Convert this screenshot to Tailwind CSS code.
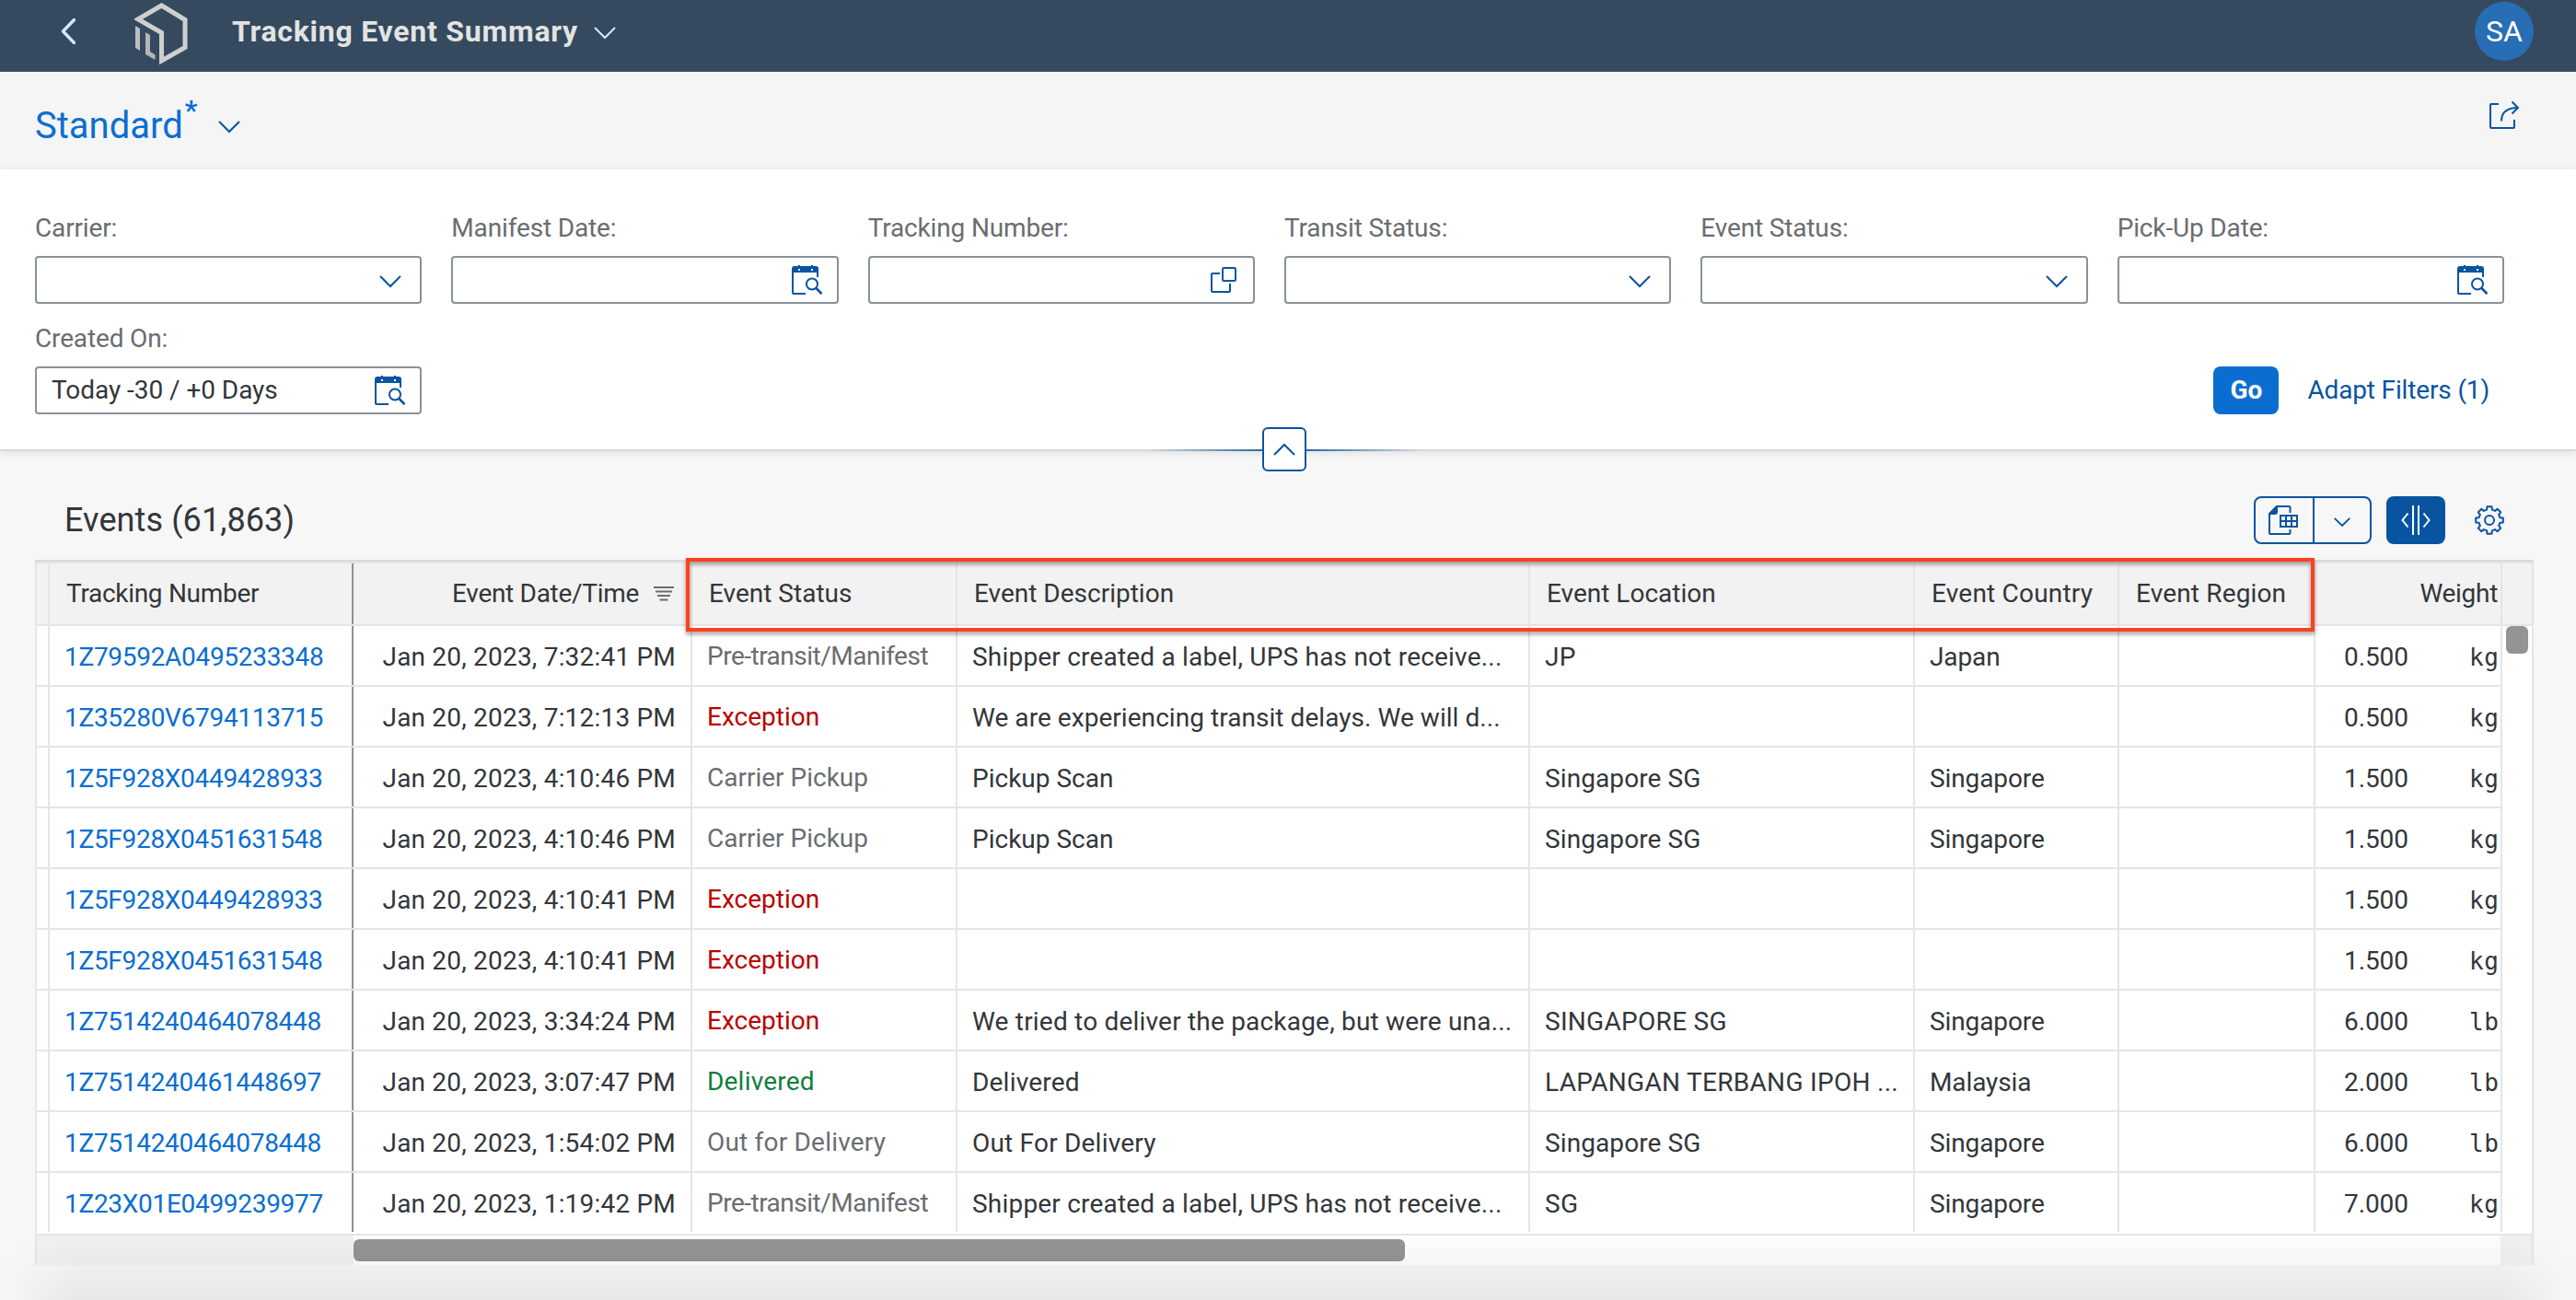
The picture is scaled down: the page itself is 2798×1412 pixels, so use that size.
<!DOCTYPE html>
<html lang="en">
<head>
  <meta charset="UTF-8">
  <meta name="viewport" content="width=device-width,initial-scale=1">
  <title>Tracking Event Summary</title>
  <script src="https://cdn.jsdelivr.net/npm/@tailwindcss/browser@4"></script>
</head>
<body class="relative h-[1412px] overflow-hidden bg-[#f7f7f7] font-['Roboto',sans-serif] text-[28px] leading-8 text-[#32363a]">

  <!-- Icons -->
  <svg class="hidden">
    <symbol id="chevron" viewBox="0 0 24 14"><path d="M1 1l11 11L23 1" fill="none" stroke="currentColor" stroke-width="2"/></symbol>
    <symbol id="calendar" viewBox="0 0 34 32">
      <path d="M28 13V4a2 2 0 0 0-2-2H3a2 2 0 0 0-2 2v26a1 1 0 0 0 1 1h13" fill="none" stroke="currentColor" stroke-width="2"/>
      <path d="M1 4q0-2 2-2h4V0h2v2h12V0h2v2h4q2 0 2 2v4H1z" fill="currentColor"/>
      <path d="M7 4h2v2H7zM21 4h2v2h-2z" fill="#fff"/>
      <circle cx="22" cy="20.500" r="6" fill="none" stroke="currentColor" stroke-width="2"/>
      <path d="M26.500 25l6 6.200" stroke="currentColor" stroke-width="2.600"/>
    </symbol>
    <symbol id="valuehelp" viewBox="0 0 28 28">
      <path d="M10 7H2a1 1 0 0 0-1 1v18a1 1 0 0 0 1 1h18a1 1 0 0 0 1-1v-8" fill="none" stroke="currentColor" stroke-width="2"/>
      <rect x="13" y="1" width="14" height="14" rx="1.500" fill="none" stroke="currentColor" stroke-width="2"/>
    </symbol>
  </svg>

  <!-- Shell bar -->
  <header class="flex h-[78px] items-center bg-[#354a5f] pr-[46px] pb-[10px] pl-[66px]">
    <svg class="h-7 w-4 text-[#d1e8ff]" viewBox="0 0 16 28"><path d="M14.500 1.500L2.500 14l12 12.500" fill="none" stroke="currentColor" stroke-width="3.400" stroke-linecap="round" stroke-linejoin="round"/></svg>
    <svg class="mt-1 ml-16 h-[68px] w-[60px]" viewBox="0 0 60 68">
      <path d="M29.500 4L55 19.500v30L29.500 64V33.500L4 18.800z" fill="none" stroke="#cfcfcf" stroke-width="5" stroke-linejoin="miter"/>
      <path d="M1 26l5 3v24l-5-3z" fill="#bdbdbd"/>
      <path d="M12 33l5 3v18l5.500 3.500v5.500L12 57z" fill="#b5b5b5"/>
    </svg>
    <h1 class="ml-[46px] text-[32px] font-bold tracking-[0.75px] text-[#e3e3e3]">Tracking Event Summary</h1>
    <svg class="mt-1 ml-[17px] h-3.5 w-6 text-[#d1e8ff]"><use href="#chevron"/></svg>
    <div class="ml-auto flex size-16 items-center justify-center rounded-full bg-[#286eb4] text-[32px] text-white">SA</div>
  </header>

  <!-- Variant title -->
  <div class="flex h-[106px] items-center bg-[#f5f5f5] pr-[60px] pb-[2px] pl-[38px] text-[#0854a0]">
    <h2 class="mt-3.5 text-[40px] leading-10 text-[#0a6ed1]">Standard</h2>
    <span class="mb-5 ml-0.5 text-[30px] font-bold leading-8 text-[#0a6ed1]">*</span>
    <svg class="mt-4 ml-[23px] h-3.5 w-6"><use href="#chevron"/></svg>
    <svg class="mb-2.5 ml-auto h-8 w-[34px]" viewBox="0 0 34 32" fill="none" stroke="currentColor" stroke-width="2">
      <path d="M10 4H2a1 1 0 0 0-1 1v24a1 1 0 0 0 1 1h24a1 1 0 0 0 1-1v-8"/>
      <path d="M13 22.500C13 13 19 8 31 8M24.500 1.500L31 8l-6.500 6.500"/>
    </svg>
  </div>

  <!-- Filter bar -->
  <section class="relative h-[306px] border-b-2 border-[#d9d9d9] bg-white pt-[48px] pr-[78px] pl-[38px] shadow-[0_2px_8px_rgba(0,0,0,0.1)]">
    <div id="filters" class="grid grid-cols-6 gap-x-8 gap-y-[22px]"></div>
    <div class="absolute top-[214px] right-[94px] flex items-center gap-[31px] text-[#0854a0]">
      <button class="h-[52px] w-[71px] rounded-lg bg-[#0a6ed1] font-bold text-white">Go</button>
      <span class="tracking-[-0.15px]">Adapt Filters (1)</span>
    </div>
    <div class="absolute top-[304px] left-[1245px] h-0.5 w-[300px] bg-linear-to-r from-[#0854a0]/0 via-[#0854a0] to-[#0854a0]/0"></div>
    <button class="absolute top-[280px] left-[1371px] flex size-12 items-center justify-center rounded-md border-2 border-[#0854a0] bg-white text-[#0854a0]">
      <svg class="h-3.5 w-6 rotate-180"><use href="#chevron"/></svg>
    </button>
  </section>

  <!-- Toolbar -->
  <div class="flex h-[118px] items-center pt-8 pr-[78px] pl-[70px] text-[#0854a0]">
    <h3 class="mr-auto text-[36px] tracking-[0.1px] text-[#32363a]">Events (61,863)</h3>
    <div class="flex h-[52px] w-32 rounded-lg border-2 border-[#0854a0]">
      <div class="flex w-16 items-center border-r-2 border-[#0854a0] pl-3.5">
        <svg class="size-8" viewBox="0 0 32 32">
          <path d="M23.500 8V2a1 1 0 0 0-1-1H9L1 9v21a1 1 0 0 0 1 1h20.500a1 1 0 0 0 1-1v-4" fill="none" stroke="currentColor" stroke-width="2"/>
          <path d="M0 10L9 0h1v7q0 3-3 3z" fill="currentColor"/>
          <path d="M12 10h20v14H12z" fill="currentColor"/>
          <path d="M14 12h4v4h-4zM20 12h4v4h-4zM26 12h4v4h-4zM14 18h4v4h-4zM20 18h4v4h-4zM26 18h4v4h-4z" fill="#f7f7f7"/>
        </svg>
      </div>
      <div class="flex flex-1 items-center justify-center pt-1">
        <svg class="h-[11px] w-[18px]" viewBox="0 0 18 11"><path d="M.7.8L9 9 17.300.8" fill="none" stroke="currentColor" stroke-width="1.800"/></svg>
      </div>
    </div>
    <div class="ml-4 flex h-[52px] w-16 items-center justify-center rounded-lg bg-[#0854a0]">
      <svg class="size-8" viewBox="0 0 32 32" fill="none" stroke="#fff" stroke-width="2"><path d="M13 0v32M19 0v32M7.500 8.500L1.500 16l6 7.500M24.500 8.500l6 7.500-6 7.500"/></svg>
    </div>
    <svg class="ml-8 size-8" viewBox="0 0 32 32" fill="none" stroke="currentColor" stroke-width="2" stroke-linejoin="round">
      <path d="M30.800 13.400V18.600L27.450 18.850 26.100 22.100 28.300 24.600 24.600 28.300 22.100 26.100 18.850 27.450 18.600 30.800H13.400L13.150 27.450 9.900 26.100 7.400 28.300 3.700 24.600 5.900 22.100 4.550 18.850 1.200 18.600V13.400L4.550 13.150 5.900 9.900 3.700 7.400 7.400 3.700 9.900 5.900 13.150 4.550 13.400 1.200H18.600L18.850 4.550 22.100 5.900 24.600 3.700 28.300 7.400 26.100 9.900 27.450 13.150z"/>
      <circle cx="16" cy="16" r="5"/>
    </svg>
  </div>

  <!-- Table -->
  <main class="relative mr-[46px] ml-[38px] border-x-2 border-[#e5e5e5]">
    <div class="-mx-0.5 h-1 border-t-2 border-[#d9d9d9] bg-[#e5e5e5]"></div>
    <div class="grid h-[68px] grid-cols-[14px_330px_368px_288px_622px_418px_222px_213px_203px_32px] border-b-2 border-[#e5e5e5] bg-[#f2f2f2]">
      <div class="border-r-2 border-[#e5e5e5]"></div>
      <div class="flex items-center border-r-2 border-[#8f9193] pl-[18px] tracking-[-0.3px]">Tracking Number</div>
      <div class="flex items-center justify-end gap-4 border-r-2 border-[#e5e5e5] pr-[18px] tracking-[-0.3px]">Event Date/Time
        <svg class="h-4 w-[22px]" viewBox="0 0 22 16" fill="none" stroke="#6a6d70" stroke-width="2"><path d="M0 1h22M2 5.500h18M4 10h14M6.500 14.500h9"/></svg>
      </div>
      <div class="flex items-center border-r-2 border-[#e5e5e5] pl-[18px]">Event Status</div>
      <div class="flex items-center border-r-2 border-[#e5e5e5] pl-[18px]">Event Description</div>
      <div class="flex items-center border-r-2 border-[#e5e5e5] pl-[18px]">Event Location</div>
      <div class="flex items-center border-r-2 border-[#e5e5e5] pl-[18px] tracking-[0.2px]">Event Country</div>
      <div class="flex items-center border-r-2 border-[#e5e5e5] pl-[18px] tracking-[0.15px]">Event Region</div>
      <div class="flex items-center justify-end border-r-2 border-[#e5e5e5] pr-[3px] tracking-[-0.3px]">Weight</div>
      <div></div>
    </div>
    <div class="flex">
      <div id="rows" class="w-[2678px]"></div>
      <div class="w-8 border-b-2 border-[#e5e5e5] bg-white pl-1"><div class="h-[30px] w-6 rounded-md bg-[#949494]"></div></div>
    </div>
    <!-- horizontal scrollbar -->
    <div class="flex h-8 bg-[#f0f0f0]">
      <div class="w-[344px]"></div>
      <div class="flex w-[2332px] items-center bg-[#fdfdfd]"><div class="h-6 w-[1142px] rounded-md bg-[#949494]"></div></div>
    </div>
    <!-- highlight around the event columns -->
    <div class="absolute -top-0.5 left-[705px] h-20 w-[1769px] border-4 border-[#ff411c] drop-shadow-[0_3px_2px_rgba(0,0,0,0.4)]"></div>
  </main>

  <!-- bottom fade -->
  <div class="pointer-events-none absolute inset-x-0 bottom-0 h-[72px] bg-linear-to-t from-black/6 to-black/0 mask-x-from-97%"></div>

  <script>
    const filters = [
      ['Carrier:', 'chevron'], ['Manifest Date:', 'calendar'], ['Tracking Number:', 'valuehelp'],
      ['Transit Status:', 'chevron'], ['Event Status:', 'chevron'], ['Pick-Up Date:', 'calendar'],
      ['Created On:', 'calendar', 'Today -30 / +0 Days']
    ];
    const iconClass = {
      chevron: 'mr-5 mt-1 h-3.5 w-6',
      calendar: 'mr-[15px] h-8 w-[34px]',
      valuehelp: 'mr-[18px] size-7'
    };
    document.getElementById('filters').innerHTML = filters.map(([label, icon, value]) => `
      <div>
        <label class="block h-8 mb-[14px] tracking-[-0.15px] text-[#6a6d70]">${label}</label>
        <div class="flex h-[52px] items-center justify-between rounded-sm border-2 border-[#89919a] bg-white pl-4">
          <span class="tracking-[-0.05px]">${value ?? ''}</span>
          <svg class="${iconClass[icon]} text-[#0854a0]"><use href="#${icon}"/></svg>
        </div>
      </div>`).join('');

    const rows = [
      ['1Z79592A0495233348','7:32:41','Pre-transit/Manifest','Shipper created a label, UPS has not receive...','JP','Japan','0.500','kg'],
      ['1Z35280V6794113715','7:12:13','Exception','We are experiencing transit delays. We will d...','','','0.500','kg'],
      ['1Z5F928X0449428933','4:10:46','Carrier Pickup','Pickup Scan','Singapore SG','Singapore','1.500','kg'],
      ['1Z5F928X0451631548','4:10:46','Carrier Pickup','Pickup Scan','Singapore SG','Singapore','1.500','kg'],
      ['1Z5F928X0449428933','4:10:41','Exception','','','','1.500','kg'],
      ['1Z5F928X0451631548','4:10:41','Exception','','','','1.500','kg'],
      ['1Z7514240464078448','3:34:24','Exception','We tried to deliver the package, but were una...','SINGAPORE SG','Singapore','6.000','lb'],
      ['1Z7514240461448697','3:07:47','Delivered','Delivered','LAPANGAN TERBANG IPOH ...','Malaysia','2.000','lb'],
      ['1Z7514240464078448','1:54:02','Out for Delivery','Out For Delivery','Singapore SG','Singapore','6.000','lb'],
      ['1Z23X01E0499239977','1:19:42','Pre-transit/Manifest','Shipper created a label, UPS has not receive...','SG','Singapore','7.000','kg']
    ];
    const statusClass = {
      'Exception': 'text-[#bb0000]',
      'Delivered': 'text-[#107e3e] tracking-[0.2px]',
      'Carrier Pickup': 'text-[#6a6d70]',
      'Out for Delivery': 'text-[#6a6d70] tracking-[0.2px]',
      'Pre-transit/Manifest': 'text-[#6a6d70] tracking-[-0.5px]'
    };
    const cell = 'flex items-center whitespace-nowrap border-r-2 border-[#e5e5e5] pt-1 pl-4';
    const descTracking = {
      'Pickup Scan': '',
      'We are experiencing transit delays. We will d...': 'tracking-[0.05px]'
    };

    document.getElementById('rows').innerHTML = rows.map(([no, time, status, desc, loc, country, weight, unit], i) => `
      <div class="grid ${i === rows.length - 1 ? 'h-[68px] pb-0.5' : 'h-[66px]'} grid-cols-[14px_330px_368px_288px_622px_418px_222px_213px_203px] border-b-2 border-[#e5e5e5] bg-white">
        <div class="border-r-2 border-[#e5e5e5]"></div>
        <div class="flex items-center border-r-2 border-[#8f9193] pt-1 pl-4 tracking-[-0.3px] text-[#0a6ed1]">${no}</div>
        <div class="flex items-center justify-end border-r-2 border-[#e5e5e5] pt-1 pr-4 tracking-[0.2px]">Jan 20, 2023, ${time} PM</div>
        <div class="flex items-center border-r-2 border-[#e5e5e5] pt-0.5 pl-4 ${statusClass[status]}">${status}</div>
        <div class="${cell} ${descTracking[desc] ?? 'tracking-[0.2px]'}">${desc}</div>
        <div class="${cell} ${loc === loc.toUpperCase() ? 'tracking-[0.3px]' : 'tracking-[0.1px]'}">${loc}</div>
        <div class="${cell} tracking-[-0.1px]">${country}</div>
        <div class="${cell}"></div>
        <div class="flex items-center overflow-hidden border-r-2 border-[#e5e5e5] pt-1 pl-[31px]">
          <span class="w-[136px] shrink-0 tracking-[-0.1px]">${weight}</span>
          <span class="font-['DejaVu_Sans_Mono',monospace] text-[26px] tracking-[0.6px]">${unit}</span>
        </div>
      </div>`).join('');
  </script>
</body>
</html>
